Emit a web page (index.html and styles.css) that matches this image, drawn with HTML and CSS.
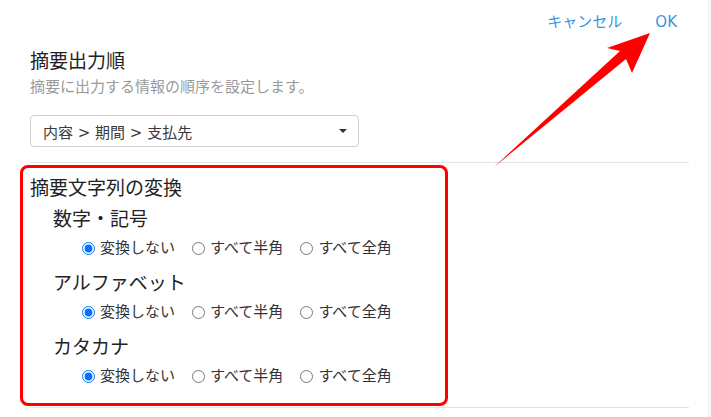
FILE: index.html
```html
<!DOCTYPE html>
<html lang="ja">
<head>
<meta charset="utf-8">
<title>摘要設定</title>
<link rel="stylesheet" href="styles.css">
</head>
<body>
<div class="page">
  <main class="main">
    <header class="header">
      <a class="link">キャンセル</a>
      <a class="link ok">OK</a>
    </header>
    <h1 class="title">摘要出力順</h1>
    <p class="subtitle">摘要に出力する情報の順序を設定します。</p>
    <div class="select">
      <span class="select-text">内容 &gt; 期間 &gt; 支払先</span>
      <span class="caret"></span>
    </div>
    <div class="rule rule-top"></div>
    <section class="highlight">
      <h2 class="section-title">摘要文字列の変換</h2>
      <div class="group">
        <h3 class="group-title">数字・記号</h3>
        <div class="options">
          <label class="option"><input type="radio" name="num" checked><span>変換しない</span></label>
          <label class="option"><input type="radio" name="num"><span>すべて半角</span></label>
          <label class="option"><input type="radio" name="num"><span>すべて全角</span></label>
        </div>
      </div>
      <div class="group">
        <h3 class="group-title">アルファベット</h3>
        <div class="options">
          <label class="option"><input type="radio" name="alpha" checked><span>変換しない</span></label>
          <label class="option"><input type="radio" name="alpha"><span>すべて半角</span></label>
          <label class="option"><input type="radio" name="alpha"><span>すべて全角</span></label>
        </div>
      </div>
      <div class="group">
        <h3 class="group-title">カタカナ</h3>
        <div class="options">
          <label class="option"><input type="radio" name="kana" checked><span>変換しない</span></label>
          <label class="option"><input type="radio" name="kana"><span>すべて半角</span></label>
          <label class="option"><input type="radio" name="kana"><span>すべて全角</span></label>
        </div>
      </div>
    </section>
    <div class="rule rule-bottom"></div>
  </main>
  <div class="scroll-strip"></div>
  <svg class="arrow" width="711" height="417" viewBox="0 0 711 417" aria-hidden="true">
    <polygon points="494,167 626,59 632,73 650,33 607,48 620,51" fill="#ff0000"/>
  </svg>
</div>
</body>
</html>
```

FILE: styles.css
```css
* { box-sizing: border-box; }

html, body {
  margin: 0;
  padding: 0;
  background: #ffffff;
}

body {
  font-family: "DejaVu Sans", "Noto Sans CJK JP", sans-serif;
  color: #333333;
}

.page {
  position: relative;
  display: flex;
  width: 711px;
  height: 417px;
  overflow: hidden;
}

.main {
  width: 707px;
  padding: 0 18px 0 30px;
}

.scroll-strip {
  width: 4px;
  background: #f7f7f7;
}

.header {
  display: flex;
  justify-content: flex-end;
  gap: 33px;
  height: 44px;
  line-height: 44px;
  padding-right: 12px;
}

.link {
  font-size: 15px;
  color: #3d93e3;
  cursor: pointer;
}

.title {
  margin: 4px 0 0;
  font-size: 19px;
  font-weight: normal;
  line-height: 27px;
  color: #222222;
}

.subtitle {
  margin: 1px 0 0;
  font-size: 15px;
  line-height: 22px;
  color: #9a9a9a;
}

.select {
  display: flex;
  align-items: center;
  justify-content: space-between;
  margin-top: 17px;
  width: 329px;
  height: 32px;
  padding: 0 11px 0 12px;
  border: 1px solid #cfcfcf;
  border-radius: 4px;
  font-size: 15px;
  color: #3a3a3a;
}

.caret {
  width: 0;
  height: 0;
  border-left: 4px solid transparent;
  border-right: 4px solid transparent;
  border-top: 4px solid #333333;
}

.rule {
  height: 1px;
  background: #e3e3e3;
}

.rule-top { margin-top: 15px; }
.rule-bottom { margin-top: 1px; }

.highlight {
  margin: 2px 0 0 -10px;
  width: 428px;
  border: 3px solid #ff0000;
  border-radius: 8px;
  padding: 7px 0 5px 7px;
}

.section-title {
  margin: 0;
  font-size: 19px;
  font-weight: normal;
  line-height: 26px;
  color: #222222;
}

.group {
  margin-bottom: 10px;
}

.section-title + .group {
  margin-top: 5px;
}

.group-title {
  margin: 0;
  padding-left: 23px;
  font-size: 19px;
  font-weight: normal;
  line-height: 26px;
  color: #222222;
}

.options {
  display: flex;
  margin-top: 4px;
  padding-left: 52px;
  height: 24px;
  align-items: center;
}

.option {
  display: flex;
  align-items: center;
  margin-right: 17px;
  font-size: 15px;
  line-height: 24px;
  color: #333333;
}

.option input {
  width: 13px;
  height: 13px;
  margin: 0 5px 0 0;
}

.arrow {
  position: absolute;
  left: 0;
  top: 0;
  pointer-events: none;
}
```
